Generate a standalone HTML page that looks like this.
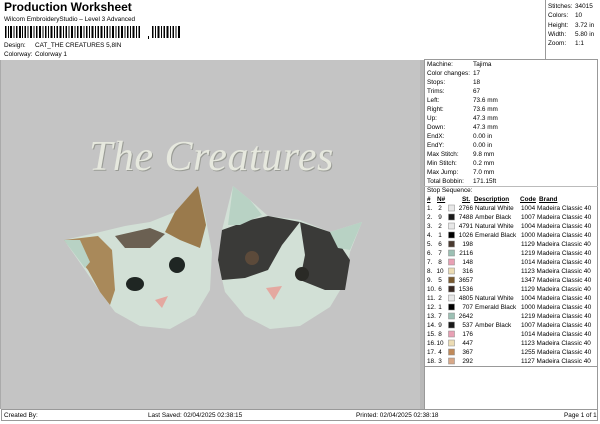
<!DOCTYPE html>
<html><head><meta charset="utf-8"><style>
*{margin:0;padding:0;box-sizing:border-box}
body{width:600px;height:424px;background:#fff;font-family:"Liberation Sans",Arial,sans-serif;color:#000;position:relative;overflow:hidden;font-size:6.4px}
.a{position:absolute;white-space:nowrap}
.t{font-size:6.4px;line-height:9px}
u{text-decoration:underline}
</style></head><body>
<div class="a" style="left:4px;top:0;font-size:12px;font-weight:bold;line-height:14px">Production Worksheet</div>
<div class="a t" style="left:4px;top:15px">Wilcom EmbroideryStudio – Level 3 Advanced</div>
<svg class="a" style="left:5px;top:26px" width="180" height="14">
<g fill="#000">
<rect x="0" y="0" width="1.5" height="12"/><rect x="3" y="0" width="1" height="12"/><rect x="5" y="0" width="2" height="12"/><rect x="8.5" y="0" width="1" height="12"/><rect x="11" y="0" width="1.5" height="12"/><rect x="14" y="0" width="2" height="12"/><rect x="17" y="0" width="1" height="12"/><rect x="19.5" y="0" width="1.5" height="12"/><rect x="22.5" y="0" width="1" height="12"/><rect x="25" y="0" width="2" height="12"/><rect x="28.5" y="0" width="1" height="12"/><rect x="31" y="0" width="1.5" height="12"/><rect x="34" y="0" width="2" height="12"/><rect x="37.5" y="0" width="1" height="12"/><rect x="40" y="0" width="1.5" height="12"/><rect x="43" y="0" width="1" height="12"/><rect x="45.5" y="0" width="2" height="12"/><rect x="49" y="0" width="1" height="12"/><rect x="51.5" y="0" width="1.5" height="12"/><rect x="54.5" y="0" width="2" height="12"/><rect x="58" y="0" width="1" height="12"/><rect x="60.5" y="0" width="1.5" height="12"/><rect x="63.5" y="0" width="1" height="12"/><rect x="66" y="0" width="2" height="12"/><rect x="69.5" y="0" width="1" height="12"/><rect x="72" y="0" width="1.5" height="12"/><rect x="75" y="0" width="2" height="12"/><rect x="78.5" y="0" width="1" height="12"/><rect x="81" y="0" width="1.5" height="12"/><rect x="84" y="0" width="1" height="12"/><rect x="86.5" y="0" width="2" height="12"/><rect x="90" y="0" width="1" height="12"/><rect x="92.5" y="0" width="1.5" height="12"/><rect x="95.5" y="0" width="2" height="12"/><rect x="99" y="0" width="1" height="12"/><rect x="101.5" y="0" width="1.5" height="12"/><rect x="104.5" y="0" width="1" height="12"/><rect x="107" y="0" width="2" height="12"/><rect x="110.5" y="0" width="1" height="12"/><rect x="113" y="0" width="1.5" height="12"/><rect x="116" y="0" width="2" height="12"/><rect x="119.5" y="0" width="1" height="12"/><rect x="122" y="0" width="1.5" height="12"/><rect x="125" y="0" width="1" height="12"/><rect x="127.5" y="0" width="2" height="12"/><rect x="131" y="0" width="1" height="12"/><rect x="133.5" y="0" width="1.5" height="12"/>
<rect x="143" y="10" width="1" height="3"/>
<rect x="147" y="0" width="1.5" height="12"/><rect x="150" y="0" width="1" height="12"/><rect x="152.5" y="0" width="2" height="12"/><rect x="156" y="0" width="1" height="12"/><rect x="158.5" y="0" width="1.5" height="12"/><rect x="161.5" y="0" width="2" height="12"/><rect x="165" y="0" width="1" height="12"/><rect x="167.5" y="0" width="1.5" height="12"/><rect x="170.5" y="0" width="1" height="12"/><rect x="173" y="0" width="2" height="12"/>
</g></svg>
<div class="a t" style="left:4px;top:41px">Design:</div><div class="a t" style="left:35px;top:41px">CAT_THE CREATURES 5,8IN</div>
<div class="a t" style="left:4px;top:50px">Colorway:</div><div class="a t" style="left:35px;top:50px">Colorway 1</div>

<div class="a" style="left:545px;top:0;width:1px;height:59px;background:#999"></div>
<div class="a" style="left:424px;top:59px;width:174px;height:1px;background:#999"></div>
<div class="a t" style="left:548px;top:2px;line-height:9.3px">Stitches:<br>Colors:<br>Height:<br>Width:<br>Zoom:</div>
<div class="a t" style="left:575px;top:2px;line-height:9.3px">34015<br>10<br>3.72 in<br>5.80 in<br>1:1</div>

<div class="a" style="left:0;top:60px;width:424px;height:349px;background:#c4c4c4;border-left:1px solid #aaa"></div>
<div class="a" style="left:420px;top:60px;width:4px;height:349px;background:#b8b8b8"></div>
<div class="a" style="left:89px;top:133px;font-family:'Liberation Serif',serif;font-style:italic;font-size:42px;color:#e6e8de;text-shadow:1px 1px 0 #9a9c96;letter-spacing:0.5px">The Creatures</div>
<svg class="a" style="left:0;top:0" width="424" height="409">
<path d="M64,240 L100,232 L125,226 L150,222 L175,212 L198,186 L206,220 L212,252 L210,290 L195,315 L170,329 L140,326 L115,312 L100,292 L85,270 Z" fill="#d2e0d6"/>
<path d="M64,240 L98,236 L112,250 L115,290 L110,305 L100,292 L88,270 Z" fill="#a9895a"/>
<path d="M175,212 L198,186 L206,225 L200,248 L180,240 L165,232 Z" fill="#9a7a4c"/>
<path d="M115,236 L150,228 L165,234 L150,248 L125,248 Z" fill="#6b6052"/>
<path d="M64,240 L80,240 L90,262 L85,268 Z" fill="#b8d2c4"/>
<ellipse cx="135" cy="284" rx="9" ry="7" fill="#1f2623"/>
<ellipse cx="177" cy="265" rx="8" ry="8" fill="#1f2623"/>
<path d="M155,300 L168,296 L162,308 Z" fill="#e4a8a0"/>
<path d="M233,186 L250,200 L268,216 L300,220 L330,232 L362,222 L350,252 L345,282 L330,307 L300,326 L270,329 L245,316 L225,292 L218,262 L222,230 Z" fill="#d2e0d6"/>
<path d="M222,230 L250,220 L268,216 L300,222 L282,245 L268,270 L245,278 L222,280 L218,260 Z" fill="#3a3a38"/>
<path d="M300,222 L330,232 L340,245 L350,260 L345,290 L325,290 L300,280 L305,255 Z" fill="#3a3a38"/>
<path d="M233,186 L250,200 L262,215 L240,225 L228,225 Z" fill="#b8d2c4"/>
<path d="M330,232 L362,222 L350,250 L338,248 Z" fill="#b8d2c4"/>
<circle cx="252" cy="258" r="7" fill="#5c4a3a"/>
<circle cx="302" cy="274" r="7" fill="#2a2a26"/>
<path d="M266,288 L282,286 L274,300 Z" fill="#e4a8a0"/>
</svg>

<div class="a" style="left:424px;top:60px;width:174px;height:350px;border:1px solid #999;border-top:none"></div>
<div class="a" style="left:424px;top:366px;width:174px;height:1px;background:#999"></div>
<div class="a t" style="left:427px;top:60px;line-height:9px">Machine:<br>Color changes:<br>Stops:<br>Trims:<br>Left:<br>Right:<br>Up:<br>Down:<br>EndX:<br>EndY:<br>Max Stitch:<br>Min Stitch:<br>Max Jump:<br>Total Bobbin:<br>Stop Sequence:</div>
<div class="a t" style="left:473px;top:60px;line-height:9px">Tajima<br>17<br>18<br>67<br>73.6 mm<br>73.6 mm<br>47.3 mm<br>47.3 mm<br>0.00 in<br>0.00 in<br>9.8 mm<br>0.2 mm<br>7.0 mm<br>171.15ft</div>
<div class="a" style="left:424px;top:186px;width:174px;height:1px;background:#bbb"></div>
<div class="a t" style="left:427px;top:195px;font-weight:bold"><u>#</u></div>
<div class="a t" style="left:437px;top:195px;font-weight:bold"><u>N#</u></div>
<div class="a t" style="left:462px;top:195px;font-weight:bold"><u>St.</u></div>
<div class="a t" style="left:474px;top:195px;font-weight:bold"><u>Description</u></div>
<div class="a t" style="left:520px;top:195px;font-weight:bold"><u>Code</u></div>
<div class="a t" style="left:539px;top:195px;font-weight:bold"><u>Brand</u></div>
<div class="a t" style="left:427px;top:204px;line-height:9px">1.<br>2.<br>3.<br>4.<br>5.<br>6.<br>7.<br>8.<br>9.<br>10.<br>11.<br>12.<br>13.<br>14.<br>15.<br>16.<br>17.<br>18.</div>
<div class="a t" style="left:436px;top:204px;line-height:9px;text-align:center;width:8px">2<br>9<br>2<br>1<br>6<br>7<br>8<br>10<br>5<br>6<br>2<br>1<br>7<br>9<br>8<br>10<br>4<br>3</div>
<svg class="a" style="left:448px;top:204px" width="10" height="162">
<g stroke="#888" stroke-width="0.5">
<rect x="0.5" y="1" width="6" height="6" fill="#e8e8e8"/><rect x="0.5" y="10" width="6" height="6" fill="#1a1a1a"/><rect x="0.5" y="19" width="6" height="6" fill="#e8e8e8"/><rect x="0.5" y="28" width="6" height="6" fill="#000"/><rect x="0.5" y="37" width="6" height="6" fill="#4a3a30"/><rect x="0.5" y="46" width="6" height="6" fill="#9cc0b4"/><rect x="0.5" y="55" width="6" height="6" fill="#e8a0b4"/><rect x="0.5" y="64" width="6" height="6" fill="#ecdcb4"/><rect x="0.5" y="73" width="6" height="6" fill="#7a5a30"/><rect x="0.5" y="82" width="6" height="6" fill="#3a2a24"/><rect x="0.5" y="91" width="6" height="6" fill="#e8e8e8"/><rect x="0.5" y="100" width="6" height="6" fill="#000"/><rect x="0.5" y="109" width="6" height="6" fill="#9cc0b4"/><rect x="0.5" y="118" width="6" height="6" fill="#1a1a1a"/><rect x="0.5" y="127" width="6" height="6" fill="#e8a0b4"/><rect x="0.5" y="136" width="6" height="6" fill="#ecdcb4"/><rect x="0.5" y="145" width="6" height="6" fill="#c08a5a"/><rect x="0.5" y="154" width="6" height="6" fill="#d8a888"/>
</g></svg>
<div class="a t" style="left:452px;top:204px;line-height:9px;text-align:right;width:21px">2766<br>7488<br>4791<br>1026<br>198<br>2116<br>148<br>316<br>3657<br>1536<br>4805<br>707<br>2642<br>537<br>176<br>447<br>367<br>292</div>
<div class="a t" style="left:475px;top:204px;line-height:9px">Natural White<br>Amber Black<br>Natural White<br>Emerald Black<br><br><br><br><br><br><br>Natural White<br>Emerald Black<br><br>Amber Black</div>
<div class="a t" style="left:521px;top:204px;line-height:9px">1004 Madeira Classic 40<br>1007 Madeira Classic 40<br>1004 Madeira Classic 40<br>1000 Madeira Classic 40<br>1129 Madeira Classic 40<br>1219 Madeira Classic 40<br>1014 Madeira Classic 40<br>1123 Madeira Classic 40<br>1347 Madeira Classic 40<br>1129 Madeira Classic 40<br>1004 Madeira Classic 40<br>1000 Madeira Classic 40<br>1219 Madeira Classic 40<br>1007 Madeira Classic 40<br>1014 Madeira Classic 40<br>1123 Madeira Classic 40<br>1255 Madeira Classic 40<br>1127 Madeira Classic 40</div>

<div class="a" style="left:1px;top:409px;width:597px;height:12px;border:1px solid #999"></div>
<div class="a t" style="left:4px;top:411px">Created By:</div>
<div class="a t" style="left:148px;top:411px">Last Saved: 02/04/2025 02:38:15</div>
<div class="a t" style="left:356px;top:411px">Printed: 02/04/2025 02:38:18</div>
<div class="a t" style="left:564px;top:411px">Page 1 of 1</div>
</body></html>
